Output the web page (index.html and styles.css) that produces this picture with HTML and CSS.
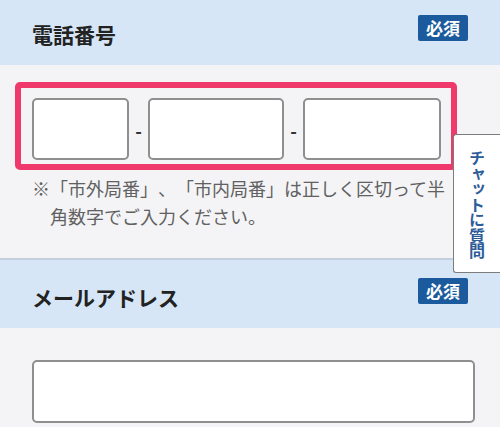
FILE: index.html
```html
<!DOCTYPE html>
<html lang="ja">
<head>
    <meta charset="UTF-8">
    <meta name="viewport" content="width=device-width, initial-scale=1.0">
    <title>お問い合わせフォーム</title>
    <link rel="stylesheet" href="styles.css">
</head>
<body>
    <form class="contact-form">
        <div class="field field-first">
            <div class="field-head">
                <h2 class="field-label">電話番号</h2>
                <span class="badge">必須</span>
            </div>
            <div class="field-body">
                <div class="tel-row">
                    <input type="tel" class="text-input tel-1" name="tel1" maxlength="5">
                    <span class="dash">-</span>
                    <input type="tel" class="text-input tel-2" name="tel2" maxlength="4">
                    <span class="dash">-</span>
                    <input type="tel" class="text-input tel-3" name="tel3" maxlength="4">
                    <div class="highlight"></div>
                </div>
                <p class="note">※「市外局番」、「市内局番」は正しく区切って半角数字でご入力ください。</p>
            </div>
        </div>

        <div class="field">
            <div class="field-head">
                <h2 class="field-label">メールアドレス</h2>
                <span class="badge">必須</span>
            </div>
            <div class="field-body">
                <input type="email" class="text-input email" name="email">
            </div>
        </div>
    </form>

    <a class="chat-tab" href="#"><span>チャットに質問</span></a>
</body>
</html>
```

FILE: styles.css
```css
body {
    margin: 0;
    padding: 0;
    background-color: #f4f4f6;
    font-family: 'Noto Sans CJK JP', 'Noto Sans', sans-serif;
    color: #222;
    overflow: hidden;
    text-spacing-trim: space-all;
}
.field-first {
    margin-top: -3px;
}
.field + .field {
    border-top: 2px solid #c3cfdc;
}
.field-head {
    height: 68px;
    padding: 0 32px;
    background-color: #d6e6f6;
    display: flex;
    align-items: center;
    justify-content: space-between;
}
.field-label {
    margin: 5px 0 0;
    font-size: 21px;
    font-weight: 700;
    line-height: 30px;
    color: #222;
}
.badge {
    margin-bottom: 6px;
    height: 26px;
    padding: 0 8px;
    line-height: 26px;
    font-size: 17px;
    font-weight: 700;
    color: #fff;
    background-color: #1b5a9c;
    border-radius: 2px;
}
.field-body {
    padding: 33px 25px 28px 32px;
    background-color: #f4f4f6;
}
.text-input {
    box-sizing: border-box;
    height: 62px;
    margin: 0;
    padding: 0 10px;
    background: #fff;
    border: 2px solid #8f8f8f;
    border-radius: 5px;
    font-size: 18px;
}
.tel-row {
    position: relative;
    display: flex;
    align-items: center;
}
.tel-1 { width: 97px; }
.tel-2 { width: 136px; }
.tel-3 { width: 138px; }
.dash {
    width: 19px;
    padding-top: 2px;
    text-align: center;
    font-size: 18px;
    font-weight: 700;
    color: #333;
}
/* pink annotation frame drawn over the phone inputs */
.highlight {
    position: absolute;
    top: -16px;
    left: -17px;
    width: 442px;
    height: 88px;
    box-sizing: border-box;
    border: 6px solid #ef386c;
    border-radius: 5px;
    pointer-events: none;
}
.note {
    max-width: 402px;
    margin: 14px 0 0;
    padding-left: 1em;
    text-indent: -1em;
    font-size: 18px;
    line-height: 28px;
    color: #616161;
}
.email {
    width: 443px;
    height: 63px;
    margin-top: -1px;
}
.chat-tab {
    position: fixed;
    top: 134px;
    right: 0;
    width: 47px;
    height: 139px;
    box-sizing: border-box;
    padding-top: 15px;
    display: flex;
    justify-content: center;
    align-items: flex-start;
    background: #fff;
    border: 1px solid #7d7d7d;
    border-right: none;
    border-radius: 3px 0 0 3px;
    text-decoration: none;
}
.chat-tab span {
    writing-mode: vertical-rl;
    font-size: 16px;
    font-weight: 700;
    letter-spacing: -0.5px;
    color: #2d5c99;
}
```
